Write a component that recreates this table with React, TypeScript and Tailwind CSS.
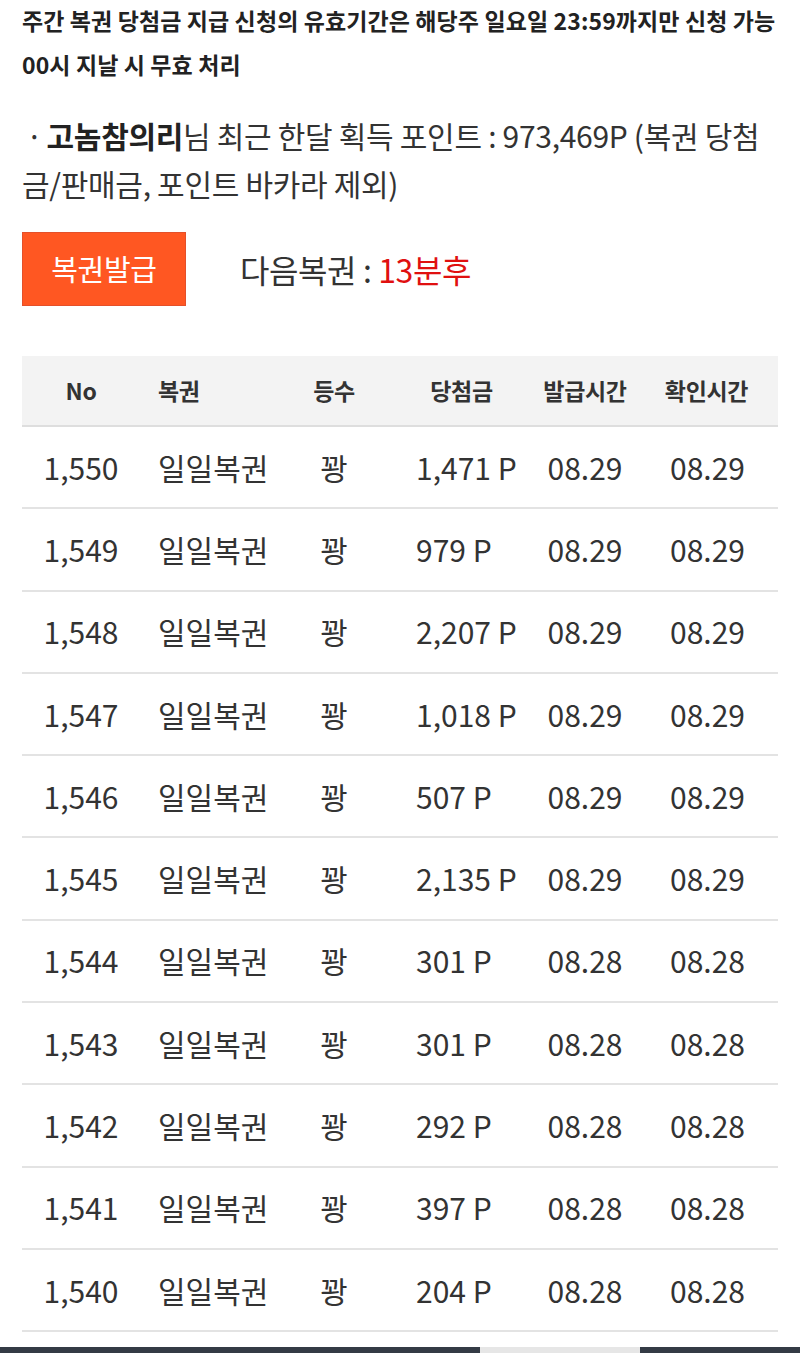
import React from 'react';

type Row = { no: string; name: string; rank: string; prize: string; issued: string; checked: string };

const rows: Row[] = [
  { no: '1,550', name: '일일복권', rank: '꽝', prize: '1,471 P', issued: '08.29', checked: '08.29' },
  { no: '1,549', name: '일일복권', rank: '꽝', prize: '979 P', issued: '08.29', checked: '08.29' },
  { no: '1,548', name: '일일복권', rank: '꽝', prize: '2,207 P', issued: '08.29', checked: '08.29' },
  { no: '1,547', name: '일일복권', rank: '꽝', prize: '1,018 P', issued: '08.29', checked: '08.29' },
  { no: '1,546', name: '일일복권', rank: '꽝', prize: '507 P', issued: '08.29', checked: '08.29' },
  { no: '1,545', name: '일일복권', rank: '꽝', prize: '2,135 P', issued: '08.29', checked: '08.29' },
  { no: '1,544', name: '일일복권', rank: '꽝', prize: '301 P', issued: '08.28', checked: '08.28' },
  { no: '1,543', name: '일일복권', rank: '꽝', prize: '301 P', issued: '08.28', checked: '08.28' },
  { no: '1,542', name: '일일복권', rank: '꽝', prize: '292 P', issued: '08.28', checked: '08.28' },
  { no: '1,541', name: '일일복권', rank: '꽝', prize: '397 P', issued: '08.28', checked: '08.28' },
  { no: '1,540', name: '일일복권', rank: '꽝', prize: '204 P', issued: '08.28', checked: '08.28' },
];

// column widths add up to the 756px table
const cols = 'grid grid-cols-[118px_140px_108px_147px_100px_143px]';

export default function App() {
  return (
    <div className="min-h-[1353px] bg-white font-['Noto_Sans_CJK_KR','Noto_Sans',sans-serif] text-[#333] overflow-hidden">
      <div className="px-[22px]">
        {/* notice */}
        <div className="-mt-[2px] text-[23px] leading-[44px] font-bold text-[#222] tracking-[0.1px]">
          <div className="whitespace-nowrap">주간 복권 당첨금 지급 신청의 유효기간은 해당주 일요일 23:59까지만 신청 가능</div>
          <div>00시 지날 시 무효 처리</div>
        </div>

        {/* monthly points */}
        <p className="mt-[25px] text-[30px] leading-[48px] tracking-[-0.3px]">
          <span className="ml-[4px] mr-[4px]">·</span>
          <b className="text-[#222]">고놈참의리</b>님 최근 한달 획득 포인트 : 973,469P (복권 당첨금/판매금, 포인트 바카라 제외)
        </p>

        {/* issue button */}
        <div className="mt-[25px] flex items-center">
          <button className="w-[164px] h-[74px] bg-[#ff5722] border border-[#e4502a] text-white text-[29px] tracking-[-0.3px]">
            복권발급
          </button>
          <div className="ml-[54px] text-[32px] tracking-[-0.4px] text-[#333]">
            다음복권 : <span className="text-[#e01010]">13분후</span>
          </div>
        </div>

        {/* ticket list */}
        <div className="mt-[50px] w-[756px]">
          <div className={`${cols} h-[71px] bg-[#f3f3f3] border-b-2 border-[#dedede] items-center text-[23px] font-bold text-[#333] tracking-[-0.3px]`}>
            <div className="text-center">No</div>
            <div className="pl-[18px]">복권</div>
            <div className="text-center">등수</div>
            <div className="text-center">당첨금</div>
            <div className="text-center">발급시간</div>
            <div className="text-center">확인시간</div>
          </div>
          {rows.map((r) => (
            <div
              key={r.no}
              className={`${cols} h-[82.3px] border-b-2 border-[#e3e3e3] items-center text-[30px] text-[#333]`}
            >
              <div className="text-center">{r.no}</div>
              <div className="pl-[18px]">{r.name}</div>
              <div className="text-center">{r.rank}</div>
              <div className="pl-[28px]">{r.prize}</div>
              <div className="text-center">{r.issued}</div>
              <div className="pl-[35px]">{r.checked}</div>
            </div>
          ))}
        </div>
      </div>

      {/* bottom tab bar, cut off by the window */}
      <div className="mt-[15px] flex h-[20px]">
        <div className="w-[480px] bg-[#343b45]" />
        <div className="w-[160px] bg-[#e6e6e6]" />
        <div className="flex-1 bg-[#343b45]" />
      </div>
    </div>
  );
}
